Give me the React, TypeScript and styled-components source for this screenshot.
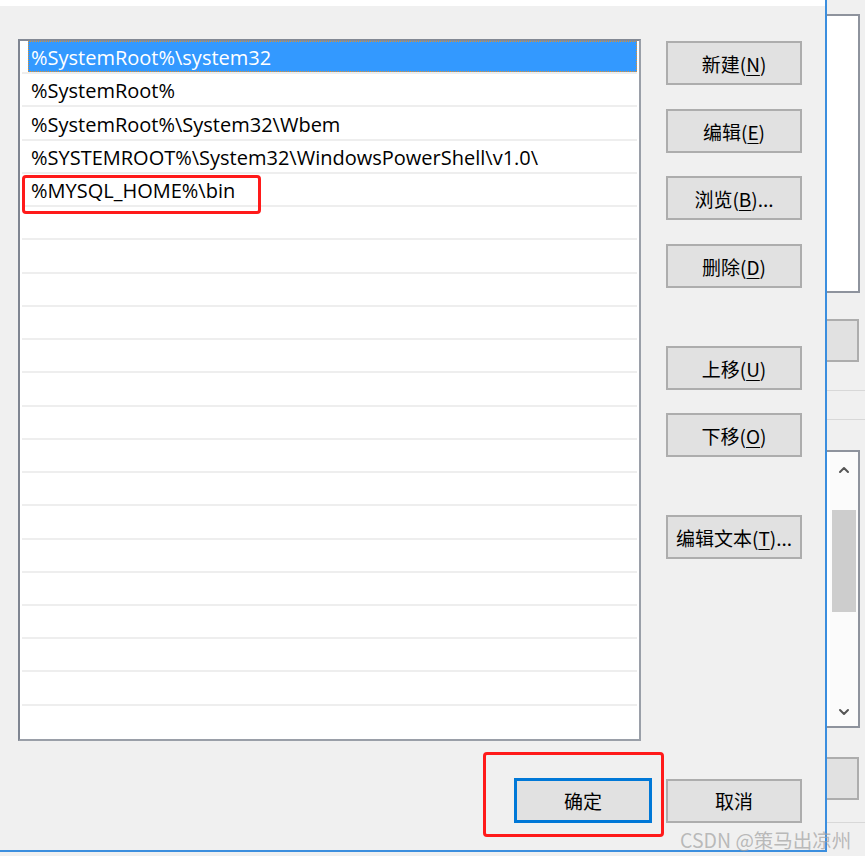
import React from "react";
import styled, { createGlobalStyle } from "styled-components";
import { ChevronUp, ChevronDown } from "lucide-react";

const GlobalStyle = createGlobalStyle`
  html, body {
    margin: 0;
    padding: 0;
    background: #f0f0f0;
  }
  body {
    font-family: "Open Sans", "Noto Sans CJK SC", sans-serif;
  }
`;

const Page = styled.div`
  position: relative;
  width: 865px;
  height: 856px;
  display: flex;
  overflow: hidden;
  background: #f0f0f0;
`;

const Dialog = styled.div`
  box-sizing: border-box;
  width: 827px;
  height: 852px;
  flex: none;
  display: flex;
  flex-direction: column;
  background: #f0f0f0;
  border-right: 2px solid #3b8ede;
  border-bottom: 2px solid #3b8ede;
`;

const TopStrip = styled.div`
  height: 6px;
  background: #ffffff;
`;

const Body = styled.div`
  display: grid;
  grid-template-columns: 623px 136px;
  column-gap: 25px;
  padding: 33px 0 0 18px;
`;

const ListBox = styled.div`
  box-sizing: border-box;
  height: 702px;
  background: #ffffff;
  border: 2px solid #9a9fa8;
  border-left-color: #7f8591;
  border-top-color: #838995;
  display: flex;
  flex-direction: column;
`;

const Row = styled.div<{ $last?: boolean }>`
  position: relative;
  flex: 1;
  margin: 0 2px;
  padding-left: 6px;
  display: flex;
  border-bottom: 2px solid ${(p) => (p.$last ? "transparent" : "#eeeeee")};
`;

const Cell = styled.div<{ $selected?: boolean }>`
  flex: 1;
  display: flex;
  align-items: center;
  padding: 2px 0 0 3px;
  font-size: 20px;
  white-space: nowrap;
  color: ${(p) => (p.$selected ? "#ffffff" : "#000000")};
  background: ${(p) => (p.$selected ? "#3399ff" : "transparent")};
  outline: ${(p) => (p.$selected ? "1px dotted #e0902c" : "none")};
  outline-offset: -1px;
`;

const RedMark = styled.div<{ $left: number; $top: number; $w: number; $h: number }>`
  position: absolute;
  box-sizing: border-box;
  left: ${(p) => p.$left}px;
  top: ${(p) => p.$top}px;
  width: ${(p) => p.$w}px;
  height: ${(p) => p.$h}px;
  border: 3px solid #ff1a1a;
  border-radius: 4px;
  pointer-events: none;
`;

const ButtonColumn = styled.div`
  display: flex;
  flex-direction: column;
  padding-top: 2px;
`;

const Button = styled.div<{ $gap?: number }>`
  box-sizing: border-box;
  width: 136px;
  height: 44px;
  margin-top: ${(p) => p.$gap ?? 0}px;
  background: #e1e1e1;
  border: 2px solid #adadad;
  display: flex;
  align-items: center;
  justify-content: center;
  font-family: "Noto Sans CJK SC", sans-serif;
  font-size: 19px;
  color: #000;
  u {
    text-decoration-thickness: 1px;
    text-underline-offset: 3px;
  }
`;

const DefaultButton = styled(Button)`
  width: 138px;
  height: 45px;
  border: 3px solid #0078d7;
`;

const Footer = styled.div`
  display: flex;
  justify-content: flex-end;
  align-items: center;
  gap: 14px;
  margin-top: 37px;
  padding-right: 23px;
`;

const ConfirmWrap = styled.div`
  position: relative;
`;

const Side = styled.div`
  flex: 1;
  display: flex;
  flex-direction: column;
  padding-top: 14px;
`;

const SidePanel = styled.div<{ $h: number; $gap?: number }>`
  box-sizing: border-box;
  width: 33px;
  height: ${(p) => p.$h}px;
  margin-top: ${(p) => p.$gap ?? 0}px;
  background: #ffffff;
  border: 2px solid #8e939d;
  border-left: none;
  display: flex;
  padding-left: 3px;
`;

const SideButton = styled.div<{ $gap: number }>`
  box-sizing: border-box;
  width: 32px;
  height: 43px;
  margin-top: ${(p) => p.$gap}px;
  background: #e1e1e1;
  border: 2px solid #adadad;
  border-left: none;
`;

const SideLine = styled.div<{ $gap: number }>`
  height: 1px;
  margin-top: ${(p) => p.$gap}px;
  background: #d8d8d8;
`;

const ScrollTrack = styled.div`
  flex: 1;
  display: flex;
  flex-direction: column;
  align-items: center;
  background: #fbfbfb;
`;

const Thumb = styled.div`
  flex: none;
  width: 24px;
  height: 102px;
  margin-top: 32px;
  background: #cdcdcd;
`;

const ArrowBox = styled.div<{ $gap: number }>`
  flex: none;
  height: 16px;
  margin-top: ${(p) => p.$gap}px;
  color: #555555;
  svg {
    display: block;
  }
`;

const Watermark = styled.div`
  position: absolute;
  left: 680px;
  top: 825px;
  font-family: "Noto Sans CJK SC", sans-serif;
  font-size: 19.5px;
  color: rgba(160, 160, 160, 0.7);
  white-space: nowrap;
  pointer-events: none;
`;

const paths = [
  "%SystemRoot%\\system32",
  "%SystemRoot%",
  "%SystemRoot%\\System32\\Wbem",
  "%SYSTEMROOT%\\System32\\WindowsPowerShell\\v1.0\\",
  "%MYSQL_HOME%\\bin",
];

const ROWS = 21;

export default function App() {
  const rows = Array.from({ length: ROWS }, (_, i) => paths[i] ?? "");
  return (
    <>
      <GlobalStyle />
      <Page>
        <Dialog>
          <TopStrip />
          <Body>
            <ListBox>
              {rows.map((text, i) => (
                <Row key={i} $last={i === ROWS - 1}>
                  <Cell $selected={i === 0}>{text}</Cell>
                  {i === 4 && <RedMark $left={0} $top={1} $w={239} $h={39} />}
                </Row>
              ))}
            </ListBox>
            <ButtonColumn>
              <Button>新建(<u>N</u>)</Button>
              <Button $gap={24}>编辑(<u>E</u>)</Button>
              <Button $gap={23}>浏览(<u>B</u>)...</Button>
              <Button $gap={24}>删除(<u>D</u>)</Button>
              <Button $gap={58}>上移(<u>U</u>)</Button>
              <Button $gap={23}>下移(<u>O</u>)</Button>
              <Button $gap={58}>编辑文本(<u>T</u>)...</Button>
            </ButtonColumn>
          </Body>
          <Footer>
            <ConfirmWrap>
              <DefaultButton>确定</DefaultButton>
              <RedMark $left={-31} $top={-26} $w={181} $h={85} />
            </ConfirmWrap>
            <Button>取消</Button>
          </Footer>
        </Dialog>
        <Side>
          <SidePanel $h={279} />
          <SideButton $gap={26} />
          <SideLine $gap={28} />
          <SideLine $gap={28} />
          <SidePanel $h={278} $gap={30}>
            <ScrollTrack>
              <ArrowBox $gap={10}>
                <ChevronUp size={16} strokeWidth={3} />
              </ArrowBox>
              <Thumb />
              <ArrowBox $gap={92}>
                <ChevronDown size={16} strokeWidth={3} />
              </ArrowBox>
            </ScrollTrack>
          </SidePanel>
          <SideButton $gap={29} />
          <SideLine $gap={22} />
        </Side>
        <Watermark>CSDN @策马出凉州</Watermark>
      </Page>
    </>
  );
}
